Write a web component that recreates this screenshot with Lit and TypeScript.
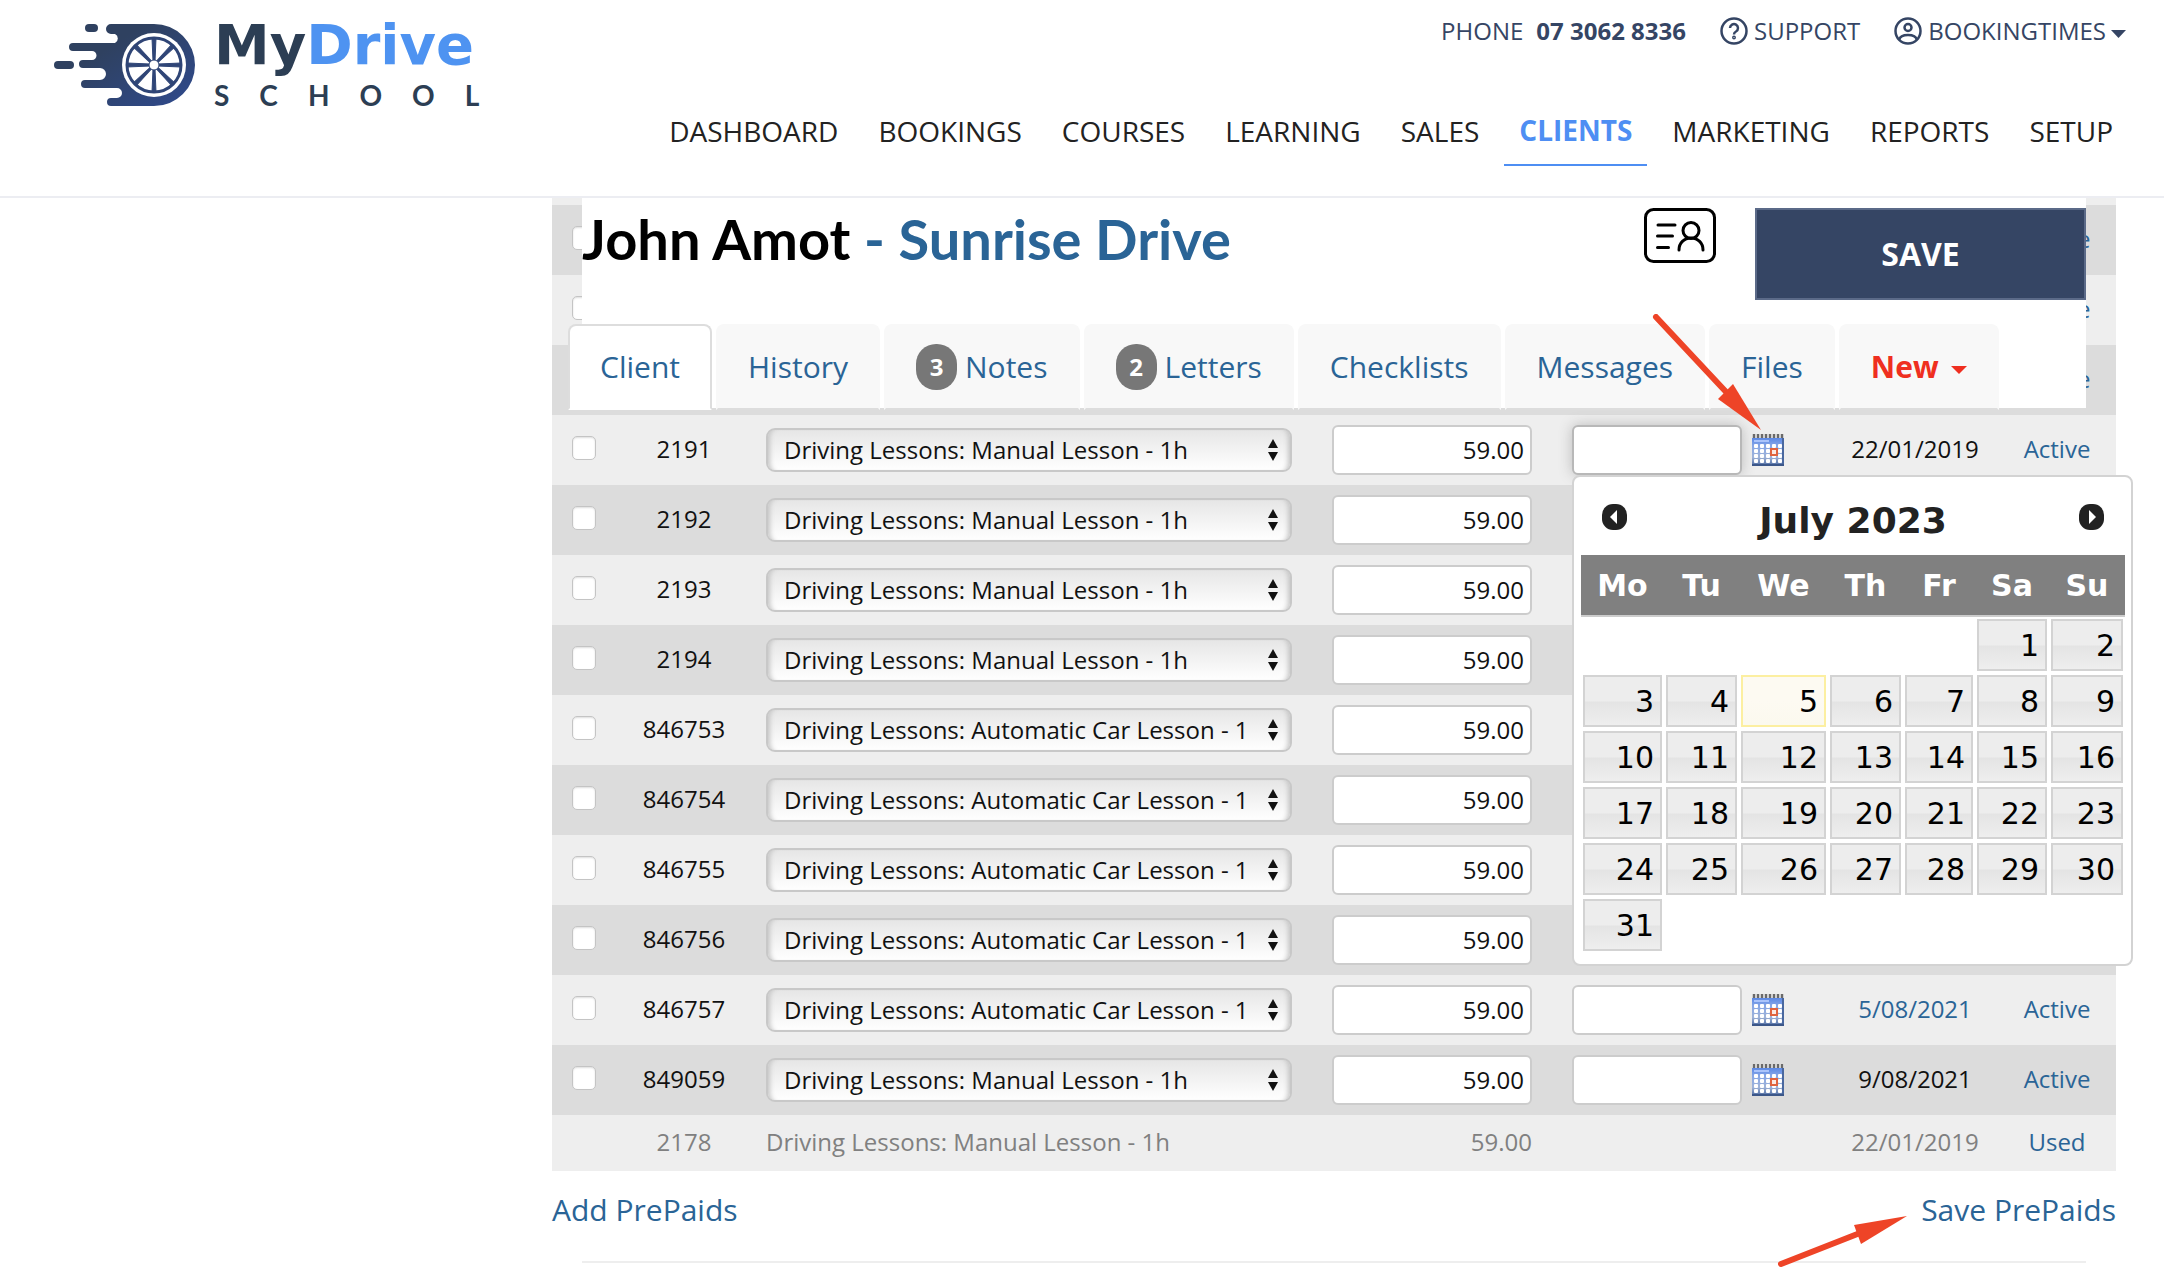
import { LitElement, html, css, svg, nothing } from "lit";
import { customElement } from "lit/decorators.js";
import { classMap } from "lit/directives/class-map.js";

interface PrePaid {
  id: string;
  product: string;
  price: string;
  issued?: string;
  issuedLink?: boolean;
  focused?: boolean;
}

const MANUAL = "Driving Lessons: Manual Lesson - 1h";
const AUTO = "Driving Lessons: Automatic Car Lesson - 1";

const PREPAIDS: PrePaid[] = [
  { id: "2191", product: MANUAL, price: "59.00", issued: "22/01/2019", focused: true },
  { id: "2192", product: MANUAL, price: "59.00" },
  { id: "2193", product: MANUAL, price: "59.00" },
  { id: "2194", product: MANUAL, price: "59.00" },
  { id: "846753", product: AUTO, price: "59.00" },
  { id: "846754", product: AUTO, price: "59.00" },
  { id: "846755", product: AUTO, price: "59.00" },
  { id: "846756", product: AUTO, price: "59.00" },
  { id: "846757", product: AUTO, price: "59.00", issued: "5/08/2021", issuedLink: true },
  { id: "849059", product: MANUAL, price: "59.00", issued: "9/08/2021" },
];

const calendarIcon = html`<svg class="cal" viewBox="0 0 32 32" aria-hidden="true">
  <defs>
    <linearGradient id="cg" x1="0" y1="0" x2="0" y2="1">
      <stop offset="0" stop-color="#5584e6" />
      <stop offset="0.3" stop-color="#86a6e6" />
      <stop offset="0.7" stop-color="#9fb3d8" />
      <stop offset="1" stop-color="#4a689f" />
    </linearGradient>
  </defs>
  <rect x="0" y="3" width="32" height="29" fill="url(#cg)" />
  <rect x="0" y="0" width="32" height="4" fill="#d0d0d0" />
  <path d="M2 0v4M6 0v4M10 0v4M14 0v4M18 0v4M22 0v4M26 0v4M30 0v4" stroke="#6a6a6a" stroke-width="2" />
  <rect x="2" y="6" width="15" height="2" fill="#a9c3fb" />
  ${[10, 15, 20, 25].map((y) =>
    [2, 8, 14, 20, 26].map((x) => svg`<rect x=${x} y=${y} width="4" height="4" rx="1" fill="#fff" />`)
  )}
  <rect x="19" y="15" width="6" height="6" fill="#fbe9e2" stroke="#e0643f" stroke-width="2" />
  <rect x="30" y="4" width="2" height="28" fill="#4a689f" />
  <rect x="0" y="30" width="32" height="2" fill="#3c5789" />
</svg>`;

@customElement("date-picker")
class DatePicker extends LitElement {
  static styles = css`
    :host {
      display: block;
      box-sizing: border-box;
      width: 561px;
      padding: 6px 6px 11px 7px;
      border: 2px solid #d3d3d3;
      border-radius: 8px;
      background: #fff;
      font-family: Verdana, "DejaVu Sans", sans-serif;
      color: #222;
    }
    .head {
      display: flex;
      box-sizing: border-box;
      align-items: center;
      justify-content: space-between;
      height: 72px;
      padding: 0 21px 4px;
    }
    .title {
      margin: 0;
      padding-top: 6px;
      font-size: 36px;
      font-weight: 700;
    }
    .step {
      display: block;
      width: 25px;
      height: 26px;
      padding: 0;
      border: 0;
      background: none;
    }
    .step svg {
      display: block;
      width: 25px;
      height: 26px;
    }
    table {
      width: 100%;
      table-layout: fixed;
      border-collapse: collapse;
    }
    th {
      height: 60px;
      padding: 0;
      background: #808080;
      border-bottom: 2px solid #ccc;
      color: #fff;
      font-size: 30px;
      font-weight: 700;
    }
    td {
      padding: 2px;
      height: 52px;
    }
    .day {
      display: block;
      box-sizing: border-box;
      width: 100%;
      height: 52px;
      padding: 2px 6px 0;
      border: 2px solid #d3d3d3;
      background: linear-gradient(#ededed 50%, #e4e4e4 52%, #eee);
      color: #000;
      font: 30px/46px Verdana, "DejaVu Sans", sans-serif;
      text-align: right;
    }
    .today {
      border-color: #fcefa1;
      background: linear-gradient(#fdfaf2 50%, #fbf9ee);
    }
  `;

  render() {
    const cells: (number | null)[] = [null, null, null, null, null];
    for (let d = 1; d <= 31; d++) cells.push(d);
    while (cells.length % 7) cells.push(null);
    const weeks = [];
    for (let i = 0; i < cells.length; i += 7) weeks.push(cells.slice(i, i + 7));
    return html`
      <div class="head">
        <button class="step" aria-label="Previous month">
          <svg viewBox="0 0 25 26"><rect width="25" height="26" rx="11" fill="#222" /><path d="M15 6v14l-7-7z" fill="#fff" /></svg>
        </button>
        <h2 class="title">July 2023</h2>
        <button class="step" aria-label="Next month">
          <svg viewBox="0 0 25 26"><rect width="25" height="26" rx="11" fill="#222" /><path d="M10 6v14l7-7z" fill="#fff" /></svg>
        </button>
      </div>
      <table>
        <colgroup>
          ${[83, 75, 89, 75, 72, 74, 76].map((w) => html`<col style="width:${w}px" />`)}
        </colgroup>
        <thead>
          <tr>${["Mo", "Tu", "We", "Th", "Fr", "Sa", "Su"].map((d) => html`<th scope="col">${d}</th>`)}</tr>
        </thead>
        <tbody>
          ${weeks.map(
            (w) => html`<tr>
              ${w.map((d) => html`<td>${d ? html`<button class=${classMap({ day: true, today: d === 5 })}>${d}</button>` : nothing}</td>`)}
            </tr>`
          )}
        </tbody>
      </table>
    `;
  }
}

@customElement("site-header")
class SiteHeader extends LitElement {
  static styles = css`
    :host {
      display: block;
    }
    .bar {
      box-sizing: border-box;
      display: flex;
      justify-content: space-between;
      height: 198px;
      padding: 0 36px 0 54px;
      border-bottom: 2px solid #ecedf2;
      background: #fff;
    }
    a {
      color: inherit;
      text-decoration: none;
    }
    .logo {
      display: flex;
      align-items: flex-start;
      gap: 18px;
      padding-top: 12px;
    }
    .mark {
      display: block;
      width: 142px;
      height: 104px;
    }
    .words {
      display: flex;
      flex-direction: column;
      color: #2c3e54;
    }
    .name {
      font: 700 56px/66px "DejaVu Sans", sans-serif;
    }
    .name b {
      font-weight: 700;
      color: #4e93f1;
    }
    .sub {
      font: 700 28px/34px Lato, sans-serif;
      letter-spacing: 30px;
    }
    .right {
      display: flex;
      flex-direction: column;
      align-items: flex-end;
    }
    .util {
      display: flex;
      gap: 34px;
      padding: 14px 2px 0 0;
      color: #354564;
      font-size: 24px;
      line-height: 34px;
    }
    .util a,
    .util span {
      display: flex;
      align-items: center;
      gap: 6px;
    }
    .util .phone {
      gap: 13px;
    }
    .ico {
      width: 28px;
      height: 28px;
    }
    .caret {
      width: 15px;
      height: 8px;
      margin: 6px 0 0 -1px;
    }
    nav {
      display: flex;
      gap: 10px;
      padding-top: 57px;
      color: #222;
      font-size: 28px;
      line-height: 52px;
    }
    nav a {
      padding: 0 15px 9px;
    }
    nav .on {
      border-bottom: 2px solid #4e8ef3;
      color: #4e8ef3;
      font-weight: 700;
      line-height: 50px;
    }
  `;

  render() {
    const spokes = [0, 45, 90, 135, 180, 225, 270, 315];
    return html`<header class="bar">
      <a class="logo" href="#">
        <svg class="mark" viewBox="0 0 142 104" aria-hidden="true">
          <defs>
            <linearGradient id="lg" x1="0" y1="0" x2="1" y2="1">
              <stop offset="0.3" stop-color="#2f4160" />
              <stop offset="1" stop-color="#2f4a8e" />
            </linearGradient>
          </defs>
          <path
            fill="url(#lg)"
            d="M57 12h43a41 41 0 0 1 0 82H57a4 4 0 0 1 0-8h6a5 5 0 0 0 0-10H31a4 4 0 0 1 0-8h15a5 5 0 0 0 0-12H29a4 4 0 0 1 0-8h9a4.500 4.500 0 0 0 0-9H19a4 4 0 0 1 0-8h42a5 5 0 0 0 0-9h-4a5 5 0 0 1 0-10z"
          />
          <rect x="31" y="12" width="13" height="8" rx="4" fill="#2f4160" />
          <rect x="0" y="49" width="20" height="8" rx="4" fill="#2f4160" />
          <circle cx="100" cy="53" r="32" fill="#fff" />
          <circle cx="100" cy="53" r="27" fill="#fff" stroke="#2f4576" stroke-width="3" />
          ${spokes.map(
            (a) => svg`<path d="M99 49L98 26h4L101 49z" transform="rotate(${a} 100 53)" fill="#2f4576" stroke="#2f4576" />`
          )}
          <circle cx="100" cy="53" r="5" fill="#fff" stroke="#2f4576" stroke-width="1" />
        </svg>
        <span class="words"><span class="name">My<b>Drive</b></span><span class="sub">SCHOOL</span></span>
      </a>
      <div class="right">
        <div class="util">
          <span class="phone">PHONE <b>07 3062 8336</b></span>
          <a href="#"
            ><svg class="ico" viewBox="0 0 28 28" fill="none" stroke="#354564" stroke-width="2.500" aria-hidden="true">
              <circle cx="14" cy="14" r="12.500" />
              <path d="M10 11a4 4 0 1 1 6 3.500q-2 1-2 3" />
              <circle cx="14" cy="20.500" r="0.700" /></svg
            >SUPPORT</a
          >
          <a href="#"
            ><svg class="ico" viewBox="0 0 28 28" fill="none" stroke="#354564" stroke-width="2.500" aria-hidden="true">
              <circle cx="14" cy="14" r="12.500" />
              <circle cx="14" cy="10.500" r="3.500" />
              <path d="M5 23c1-4 4-5 9-5s8 1 9 5" /></svg
            >BOOKINGTIMES<svg class="caret" viewBox="0 0 15 8" aria-hidden="true"><path d="M0 0h15L7.500 8z" fill="#354564" /></svg
          ></a>
        </div>
        <nav>
          ${["DASHBOARD", "BOOKINGS", "COURSES", "LEARNING", "SALES", "CLIENTS", "MARKETING", "REPORTS", "SETUP"].map(
            (n) => html`<a href="#" class=${classMap({ on: n === "CLIENTS" })}>${n}</a>`
          )}
        </nav>
      </div>
    </header>`;
  }
}

@customElement("client-panel")
class ClientPanel extends LitElement {
  static styles = css`
    :host {
      display: block;
    }
    .panel {
      display: flex;
      flex-direction: column;
      justify-content: space-between;
      height: 210px;
      background: #fff;
    }
    .top {
      display: flex;
      align-items: flex-start;
      padding-top: 10px;
    }
    h1 {
      flex: 1;
      margin: 0;
      font: 700 56px/62px Lato, sans-serif;
      color: #000;
    }
    h1 a {
      color: #2a6496;
      text-decoration: none;
    }
    .card {
      width: 72px;
      height: 55px;
      margin-right: 39px;
      padding: 0;
      border: 0;
      background: none;
    }
    .card svg {
      display: block;
    }
    .save {
      width: 331px;
      height: 92px;
      padding: 0 0 2px;
      border: 2px solid #5b6a88;
      background: #354564;
      color: #fff;
      font: 700 32px "Open Sans", sans-serif;
    }
    .tabs {
      display: flex;
      gap: 4px;
      margin: 0 0 -2px -14px;
      font-size: 30px;
      line-height: 82px;
    }
    .tab {
      display: flex;
      align-items: center;
      gap: 8px;
      padding: 0 30px;
      border: 2px solid #f8f8f8;
      border-bottom: 2px solid #ddd;
      border-radius: 8px 8px 0 0;
      background: #f8f8f8;
      color: #2a6496;
      text-decoration: none;
    }
    .on {
      border-color: #ddd;
      border-bottom-color: #fff;
      background: #fff;
    }
    .new {
      gap: 12px;
      color: #ef2f20;
      font-weight: 700;
    }
    .badge {
      width: 41px;
      border-radius: 20px;
      background: #777;
      color: #fff;
      font-size: 24px;
      font-weight: 700;
      line-height: 46px;
      text-align: center;
    }
    .caret {
      width: 16px;
      height: 8px;
      margin-top: 6px;
    }
  `;

  render() {
    const tabs: { label: string; badge?: number }[] = [
      { label: "Client" },
      { label: "History" },
      { label: "Notes", badge: 3 },
      { label: "Letters", badge: 2 },
      { label: "Checklists" },
      { label: "Messages" },
      { label: "Files" },
    ];
    return html`<div class="panel">
      <div class="top">
        <h1>John Amot <a href="#">- Sunrise Drive</a></h1>
        <button class="card" aria-label="Contact card">
          <svg width="72" height="55" viewBox="0 0 72 55" fill="none" stroke="#000" stroke-width="3" stroke-linecap="round">
            <rect x="1.500" y="1.500" width="69" height="52" rx="8" />
            <path d="M14 17h17M13.500 28h15M13.500 39.500h11" />
            <circle cx="47" cy="22.500" r="8" />
            <path d="M35 42c0-7 5-12 12-12s12 5 12 12" />
          </svg>
        </button>
        <button class="save">SAVE</button>
      </div>
      <div class="tabs">
        ${tabs.map(
          (t) => html`<a href="#" class=${classMap({ tab: true, on: t.label === "Client" })}
            >${t.badge ? html`<span class="badge">${t.badge}</span>` : nothing}${t.label}</a
          >`
        )}
        <a href="#" class="tab new">New<svg class="caret" viewBox="0 0 16 8" aria-hidden="true"><path d="M0 0h16L8 8z" fill="#ef2f20" /></svg></a>
      </div>
    </div>`;
  }
}

@customElement("app-root")
class AppRoot extends LitElement {
  static styles = css`
    :host {
      display: block;
      background: #fff;
      font-family: "Open Sans", sans-serif;
      color: #111;
    }
    .main {
      position: relative;
      padding: 0 48px 18px 552px;
    }
    .panel {
      position: absolute;
      top: 0;
      left: 582px;
      right: 78px;
      z-index: 1;
    }
    table {
      width: 100%;
      table-layout: fixed;
      border-collapse: collapse;
      font-size: 24px;
    }
    tr {
      height: 70px;
      background: #eee;
    }
    tr.dark {
      background: #dcdcdc;
    }
    tr.sliver {
      height: 7px;
    }
    tr.used {
      height: 56px;
      color: #808080;
    }
    td {
      padding: 0 0 3px;
      text-align: center;
    }
    td.ctl {
      padding: 0;
    }
    td.left {
      text-align: left;
    }
    td.num {
      padding-right: 40px;
      text-align: right;
    }
    a {
      color: #2a6496;
      text-decoration: none;
    }
    .tick {
      appearance: none;
      display: block;
      width: 24px;
      height: 24px;
      margin: 0 0 4px 20px;
      border: 1px solid #c4c4c4;
      border-radius: 5px;
      background: #fff;
      box-shadow: inset 0 1px 2px #ddd;
    }
    .pick {
      position: relative;
      width: 526px;
    }
    .pick select {
      appearance: none;
      display: block;
      box-sizing: border-box;
      width: 100%;
      height: 44px;
      padding: 0 40px 2px 16px;
      border: 2px solid #c8c8c8;
      border-radius: 9px;
      background: linear-gradient(#e6e6e6, #fff);
      box-shadow: inset 6px 0 5px -4px #c4c4c4, inset -6px 0 5px -4px #c4c4c4;
      color: #111;
      font: 24px "Open Sans", sans-serif;
    }
    .pick svg {
      position: absolute;
      top: 11px;
      right: 13px;
      width: 12px;
      height: 22px;
    }
    .box {
      display: block;
      box-sizing: border-box;
      width: 200px;
      height: 50px;
      padding: 0 6px 2px;
      border: 2px solid #ccc;
      border-radius: 6px;
      background: #fff;
      color: #111;
      font: 24px "Open Sans", sans-serif;
      text-align: right;
    }
    .date {
      position: relative;
      display: flex;
      align-items: center;
      gap: 10px;
    }
    .date .box {
      width: 170px;
    }
    .date .focused {
      border-color: #b8b8b8;
      box-shadow: 0 0 14px #bbb;
    }
    .calbtn {
      padding: 0;
      border: 0;
      background: none;
    }
    .cal {
      display: block;
      width: 32px;
      height: 32px;
    }
    date-picker {
      position: absolute;
      top: 50px;
      left: 0;
      z-index: 2;
    }
    .foot {
      display: flex;
      justify-content: space-between;
      font-size: 30px;
      line-height: 42px;
      padding: 18px 0 30px;
    }
    hr {
      height: 2px;
      margin: 0 30px;
      border: 0;
      background: #eee;
    }
    .arrow {
      position: absolute;
      z-index: 3;
      pointer-events: none;
    }
    .a1 {
      top: 116px;
      right: 402px;
      width: 110px;
      height: 118px;
    }
    .a2 {
      top: 1016px;
      right: 256px;
      width: 132px;
      height: 54px;
    }
  `;

  private row(p: PrePaid, i: number) {
    return html`<tr class=${classMap({ dark: i % 2 === 1 })}>
      <td class="ctl"><input class="tick" type="checkbox" aria-label="Select ${p.id}" /></td>
      <td>${p.id}</td>
      <td class="ctl">
        <div class="pick">
          <select aria-label="Product for ${p.id}"><option>${p.product}</option></select>
          <svg viewBox="0 0 12 22" aria-hidden="true"><path d="M6 0l5 9H1zM6 22l5-9H1z" fill="#111" /></svg>
        </div>
      </td>
      <td class="ctl"><input class="box" type="text" aria-label="Price for ${p.id}" .value=${p.price} /></td>
      <td class="ctl">
        ${p.issued
          ? html`<div class="date">
              <input class=${classMap({ box: true, focused: !!p.focused })} type="text" aria-label="Expiry for ${p.id}" />
              <button class="calbtn" aria-label="Choose date">${calendarIcon}</button>
              ${p.focused ? html`<date-picker></date-picker>` : nothing}
            </div>`
          : nothing}
      </td>
      <td>${p.issuedLink ? html`<a href="#">${p.issued}</a>` : p.issued}</td>
      <td>${p.issued ? html`<a href="#">Active</a>` : nothing}</td>
    </tr>`;
  }

  render() {
    return html`
      <site-header></site-header>
      <main class="main">
        <client-panel class="panel"></client-panel>
        <table>
          <colgroup>
            <col style="width:50px" />
            <col style="width:164px" />
            <col />
            <col style="width:240px" />
            <col style="width:260px" />
            <col style="width:166px" />
            <col style="width:118px" />
          </colgroup>
          <tbody>
            <tr class="sliver"><td colspan="7"></td></tr>
            ${[1, 2, 3].map(
              (n) => html`<tr class=${classMap({ dark: n % 2 === 1 })}>
                <td class="ctl"><input class="tick" type="checkbox" aria-label="Select prepaid" /></td>
                <td colspan="5"></td>
                <td><a href="#">Active</a></td>
              </tr>`
            )}
            ${PREPAIDS.map((p, i) => this.row(p, i))}
            <tr class="used">
              <td></td>
              <td>2178</td>
              <td class="left">Driving Lessons: Manual Lesson - 1h</td>
              <td class="num">59.00</td>
              <td></td>
              <td>22/01/2019</td>
              <td><a href="#">Used</a></td>
            </tr>
          </tbody>
        </table>
        <div class="foot"><a href="#">Add PrePaids</a><a href="#">Save PrePaids</a></div>
        <hr />
        <svg class="arrow a1" viewBox="0 0 110 118" aria-hidden="true">
          <path d="M4 3L76 80" stroke="#ee4427" stroke-width="6" stroke-linecap="round" />
          <path d="M109 116L66 85L81 70z" fill="#ee4427" />
        </svg>
        <svg class="arrow a2" viewBox="0 0 132 54" aria-hidden="true">
          <path d="M5 50L84 19" stroke="#ee4427" stroke-width="6" stroke-linecap="round" />
          <path d="M131 2L78 11L85 30z" fill="#ee4427" />
        </svg>
      </main>
    `;
  }
}
